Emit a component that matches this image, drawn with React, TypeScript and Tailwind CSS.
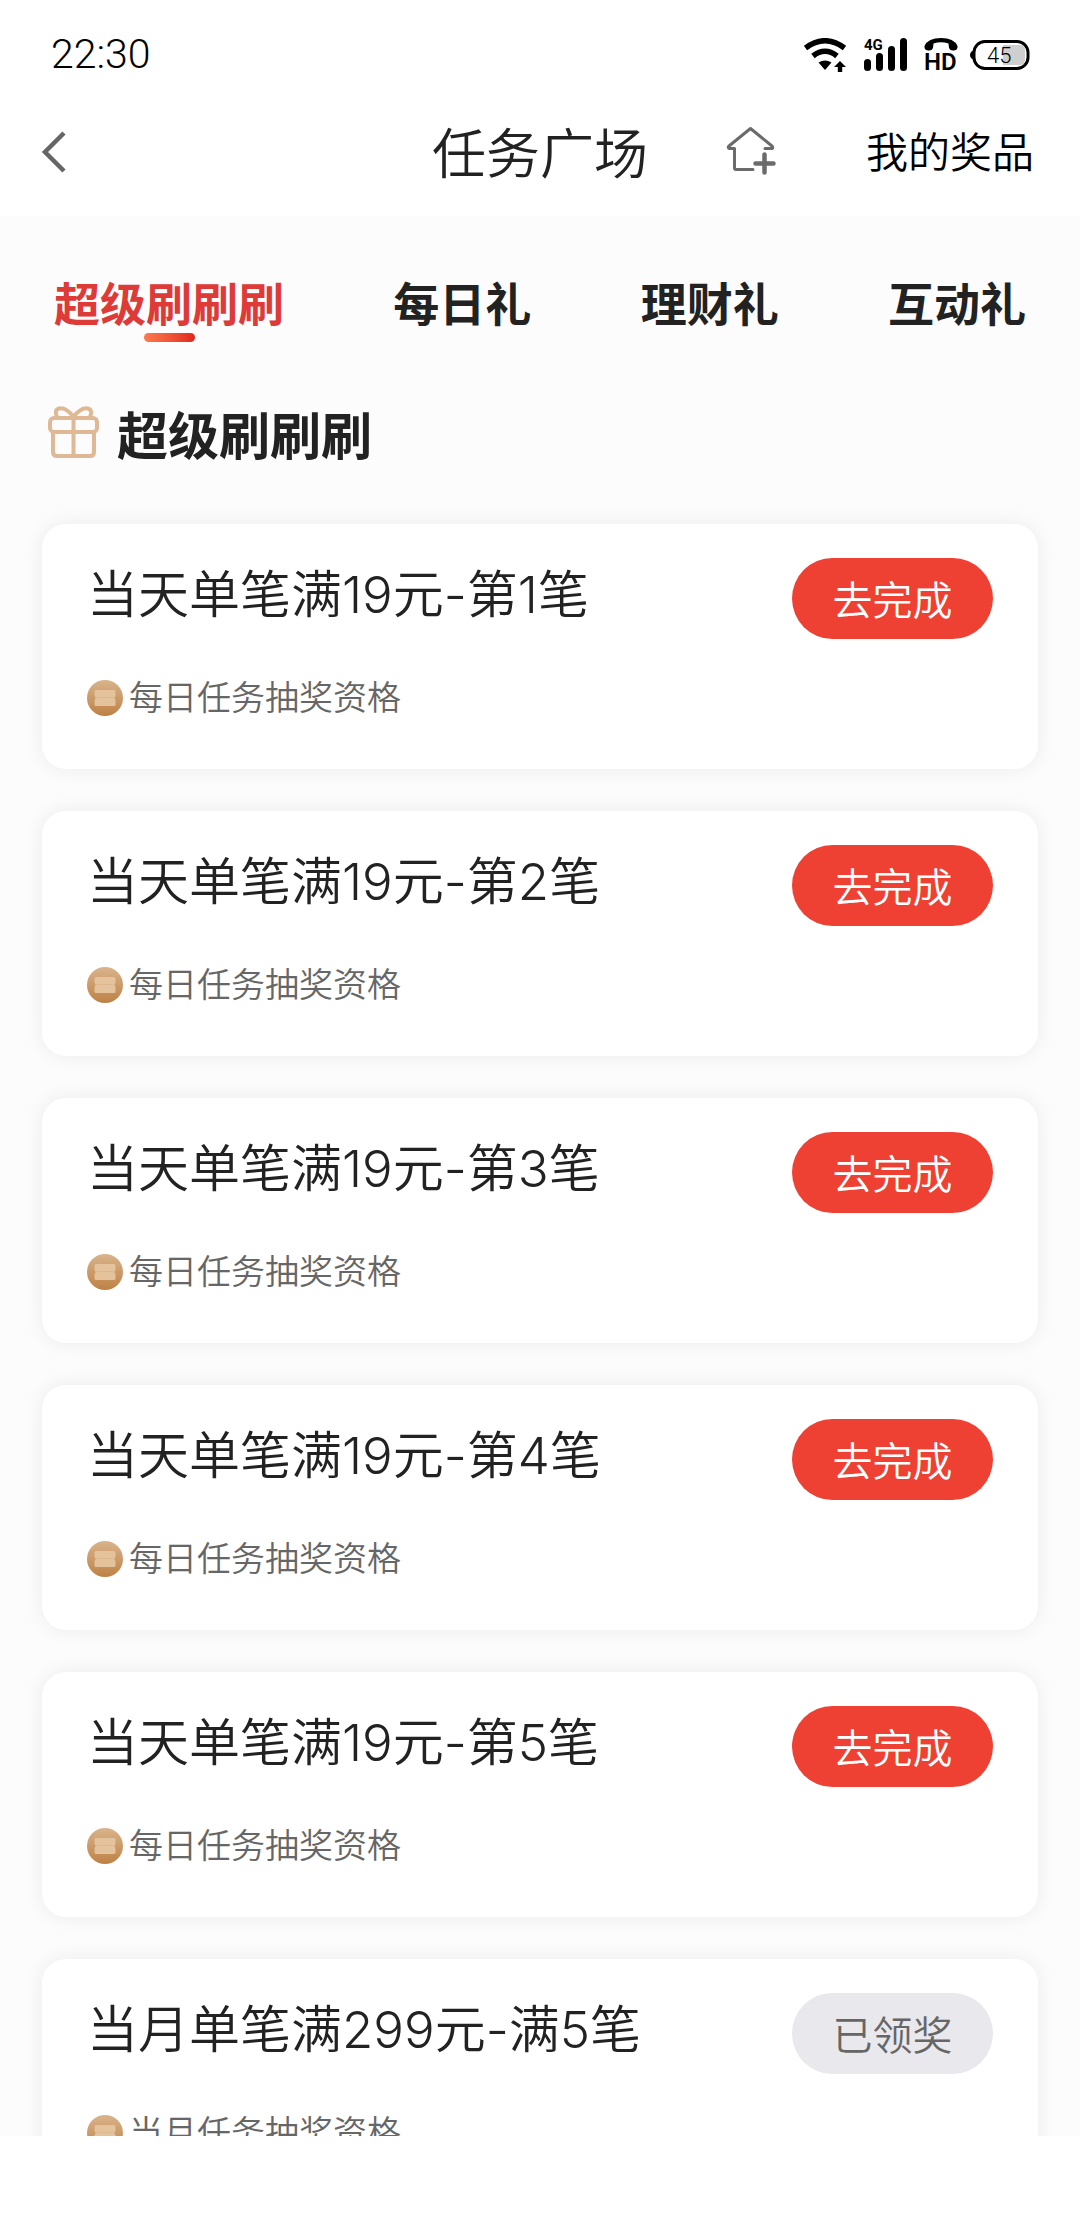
import { useState } from "react";

type Task = {
  title: string;
  reward: string;
  done: boolean;
};

const tabs = ["超级刷刷刷", "每日礼", "理财礼", "互动礼"];

const tasks: Task[] = [
  { title: "当天单笔满19元-第1笔", reward: "每日任务抽奖资格", done: false },
  { title: "当天单笔满19元-第2笔", reward: "每日任务抽奖资格", done: false },
  { title: "当天单笔满19元-第3笔", reward: "每日任务抽奖资格", done: false },
  { title: "当天单笔满19元-第4笔", reward: "每日任务抽奖资格", done: false },
  { title: "当天单笔满19元-第5笔", reward: "每日任务抽奖资格", done: false },
  { title: "当月单笔满299元-满5笔", reward: "当月任务抽奖资格", done: true },
];

const StatusBar = () => {
  return (
    <div className="flex h-[110px] shrink-0 items-center justify-between pr-[50px] pl-[51px] text-black">
      <span className="font-[Roboto,sans-serif] text-[41px] font-light">22:30</span>
      <div className="flex items-center gap-3">
        {/* wifi */}
        <svg width="48" height="34" viewBox="0 0 48 34" fill="none">
          <path d="M1.500 10Q21 -4.500 40.500 10" stroke="#000" strokeWidth="5.500" />
          <path d="M9 18Q21 8.500 33 18" stroke="#000" strokeWidth="5.500" />
          <path d="M14.500 24.500Q21 20.500 27.500 24.500L21 32Z" fill="#000" />
          <path d="M36 23l6 6h-3.800v5h-4.400v-5H30z" fill="#000" />
        </svg>
        {/* signal */}
        <svg width="48" height="42" viewBox="0 -4 48 42">
          <text x="0" y="12" fontSize="15" fontWeight="700" fontFamily="Roboto, sans-serif">
            4G
          </text>
          <rect x="0" y="21" width="7" height="12" rx="3.500" />
          <rect x="12" y="15" width="7" height="18" rx="3.500" />
          <rect x="24" y="8" width="7" height="25" rx="3.500" />
          <rect x="36" y="0" width="7" height="33" rx="3.500" />
        </svg>
        {/* HD call */}
        <svg width="34" height="46" viewBox="0 -6 34 46">
          <path d="M0.500 8Q4 0 17 0T33.500 8Q34 12 30 12.500Q26 13 25 10L24.500 5.500Q17 3 9.500 5.500L9 10Q8 13 4 12.500Q0 12 0.500 8Z" />
          <text x="0" y="32" fontSize="24" fontWeight="600" fontFamily="Roboto, sans-serif">
            HD
          </text>
        </svg>
        {/* battery */}
        <svg width="60" height="34" viewBox="0 0 60 34">
          <path d="M5 12Q0 13 0 17T5 22Z" />
          <rect x="4" y="3.500" width="54" height="27" rx="11" fill="#fff" stroke="#000" strokeWidth="3" />
          <path d="M33 7H50Q55 7 55 12V22Q55 27 50 27H33Z" fill="#cfcfcf" />
          <text x="17" y="25" fontSize="22" fontWeight="300" fontFamily="Roboto, sans-serif">
            45
          </text>
        </svg>
      </div>
    </div>
  );
};

const Header = () => {
  return (
    <header className="grid h-[106px] shrink-0 grid-cols-[1fr_auto_1fr] items-center pb-5">
      <div className="flex pl-[40px]">
        <button type="button" aria-label="返回">
          <svg width="26" height="44" viewBox="0 0 26 44" fill="none">
            <path d="M24 2L5 21L24 40" stroke="#666" strokeWidth="4.500" />
          </svg>
        </button>
      </div>
      <h1 className="pt-1 text-[54px] leading-[72px] font-[350] text-[#222]">任务广场</h1>
      <div className="flex items-center justify-between pr-[46px] pl-[78px]">
        <button type="button" aria-label="添加到主屏幕">
          <svg width="50" height="54" viewBox="0 0 50 54" fill="none" stroke="#6b6b6b" strokeLinecap="round" strokeLinejoin="round">
            <path
              d="M27 43.500H10Q8.500 43.500 8.500 42V22.500H3Q1.500 21 3 20L24.500 2.500L46 20Q47.500 22 46 22.500H39"
              strokeWidth="3"
            />
            <path d="M38.500 28.500V46.500M29.500 37.500H47.500" strokeWidth="4.500" />
          </svg>
        </button>
        <a href="#" className="text-[42px] leading-[60px] font-[350] text-black">
          我的奖品
        </a>
      </div>
    </header>
  );
};

const GiftIcon = () => {
  return (
    <svg width="52" height="53" viewBox="0 0 52 53" fill="none" stroke="#dfb995" strokeWidth="4" strokeLinejoin="round">
      <rect x="2" y="12" width="47" height="14" rx="4" />
      <path d="M5 27V46Q5 50 9 50H42Q46 50 46 46V27" />
      <path d="M25.500 12V50" />
      <path d="M9 11Q6 4 11 2.500Q18 1 25.500 11Q33 1 40 2.500Q45 4 42 11" />
    </svg>
  );
};

const CoinIcon = () => {
  return (
    <svg width="36" height="36" viewBox="0 0 36 36">
      <defs>
        <linearGradient id="coin" x1="0" y1="0" x2="0" y2="1">
          <stop offset="0" stopColor="#d9b48c" />
          <stop offset="1" stopColor="#be8145" />
        </linearGradient>
      </defs>
      <circle cx="18" cy="18" r="18" fill="url(#coin)" />
      <path
        d="M9 10H27Q28.500 10 28.500 11.500V16Q26.500 18 28.500 20V24.500Q28.500 26 27 26H9Q7.500 26 7.500 24.500V20Q9.500 18 7.500 16V11.500Q7.500 10 9 10Z"
        fill="#e3c29c"
      />
      <path d="M9.500 17.500H26.500" stroke="#dab78f" strokeWidth="1" />
    </svg>
  );
};

const TaskCard = ({ title, reward, done }: Task) => {
  return (
    <li className="rounded-3xl bg-white px-[45px] pt-[34px] pb-[46px] shadow-[0_0_20px_rgba(0,0,0,0.07)]">
      <div className="flex items-start justify-between">
        <h3 className="text-[51px] leading-[74px] font-[350] text-[#222]">{title}</h3>
        <button
          type="button"
          disabled={done}
          className={`h-[81px] w-[201px] shrink-0 rounded-full pt-1 text-[40px] font-[350] ${
            done ? "bg-[#e8e8ed] text-[#666]" : "bg-[#ee4033] text-white"
          }`}
        >
          {done ? "已领奖" : "去完成"}
        </button>
      </div>
      <p className="mt-[34px] flex items-center gap-[6px] text-[34px] leading-[50px] font-[350] text-[#666]">
        <CoinIcon />
        {reward}
      </p>
    </li>
  );
};

const App = () => {
  const [active, setActive] = useState(0);

  return (
    <div className="flex h-screen flex-col bg-white font-[Inter,'Noto_Sans_CJK_SC',sans-serif]">
      <StatusBar />
      <Header />
      <main className="min-h-0 flex-1 overflow-y-auto bg-[#fcfcfc] px-[42px] pt-[59px] pb-[42px] [scrollbar-width:none]">
        <nav className="flex items-start justify-between px-3">
          {tabs.map((tab, i) => (
            <button
              key={tab}
              type="button"
              onClick={() => setActive(i)}
              className={`flex flex-col items-center text-[46px] leading-[58px] font-bold ${
                i === active ? "text-[#dd3a38]" : "text-[#222]"
              }`}
            >
              {tab}
              {i === active && (
                <span className="h-[9px] w-[51px] rounded-full bg-linear-to-r from-[#fd7a4d] to-[#e0241f]" />
              )}
            </button>
          ))}
        </nav>
        <div className="mt-16 flex items-start gap-[17px] pl-[6px]">
          <GiftIcon />
          <h2 className="text-[51px] leading-[62px] font-bold text-[#222]">{tabs[active]}</h2>
        </div>
        <ul className="mt-14 flex flex-col gap-[42px]">
          {tasks.map((task) => (
            <TaskCard key={task.title} {...task} />
          ))}
        </ul>
      </main>
      <footer className="h-24 shrink-0 bg-white" />
    </div>
  );
};

export default App;
